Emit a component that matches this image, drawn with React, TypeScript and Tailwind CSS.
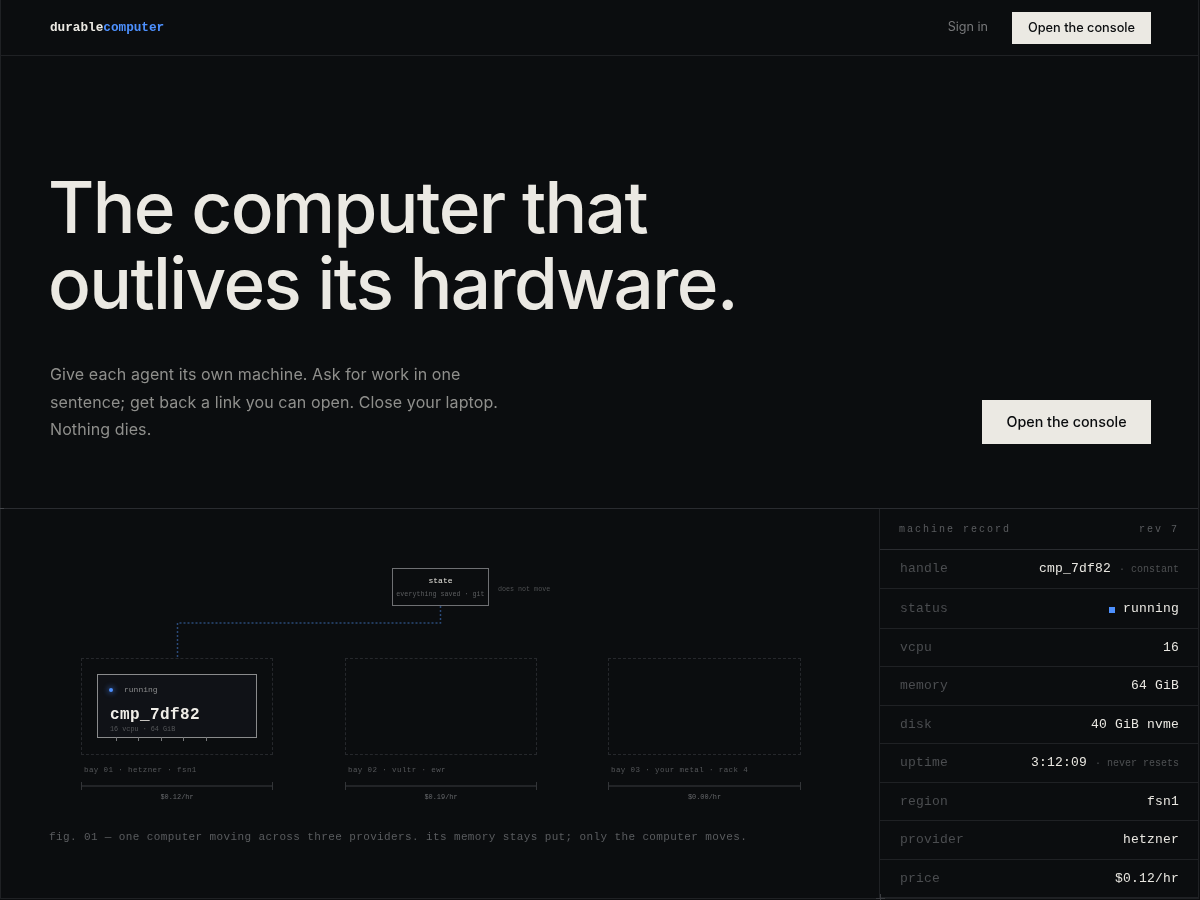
const mono = "font-['Liberation_Mono','DejaVu_Sans_Mono',monospace]";

const rows = [
  { label: "handle", value: "cmp_7df82", note: "constant", h: "h-[39px]" },
  { label: "status", value: "running", dot: true, h: "h-[40px]" },
  { label: "vcpu", value: "16", h: "h-[38px]" },
  { label: "memory", value: "64 GiB", h: "h-[39px]" },
  { label: "disk", value: "40 GiB nvme", h: "h-[38px]" },
  { label: "uptime", value: "3:12:09", note: "never resets", h: "h-[39px]" },
  { label: "region", value: "fsn1", h: "h-[38px]" },
  { label: "provider", value: "hetzner", h: "h-[39px]" },
  { label: "price", value: "$0.12/hr", h: "h-[38px]" },
];

const bays = [
  { pos: "left-[80px] w-[192px]", label: "bay 01 · hetzner · fsn1", price: "$0.12/hr" },
  { pos: "left-[344px] w-[192px]", label: "bay 02 · vultr · ewr", price: "$0.19/hr" },
  { pos: "left-[607px] w-[193px]", label: "bay 03 · your metal · rack 4", price: "$0.00/hr" },
];

function Bay({ pos, label, price }: { pos: string; label: string; price: string }) {
  return (
    <div className={`absolute top-[149px] ${pos}`}>
      <div className="h-[97px] border border-dashed border-[#26282c]" />
      <p className={`${mono} mt-[10px] pl-[3px] text-[7.5px] leading-[10px] tracking-[0.4px] whitespace-nowrap text-[#55575a]`}>
        {label}
      </p>
      <div className="relative mt-[10px] h-[2px] bg-[#222427]">
        <span className="absolute left-0 top-[-3px] h-[8px] w-[1px] bg-[#333538]" />
        <span className="absolute right-0 top-[-3px] h-[8px] w-[1px] bg-[#333538]" />
      </div>
      <p className={`${mono} mt-[5px] text-center text-[6.9px] leading-[10px] text-[#66686b]`}>{price}</p>
    </div>
  );
}

function Diagram() {
  return (
    <div className="relative h-[390px] w-full [will-change:transform]">
      {/* connector from state to the live bay */}
      <svg className="absolute left-0 top-0" width="879" height="390" fill="none">
        <path d="M439.5 97V114H176.5V149" stroke="#2b4a78" strokeWidth="1.5" strokeDasharray="2 2" />
      </svg>

      <div className="absolute left-[391px] top-[59px] flex h-[38px] w-[97px] flex-col items-center border border-[#6f7073] pt-[7px]">
        <p className={`${mono} text-[8px] leading-[10px] text-[#e4e2dc]`}>state</p>
        <p className={`${mono} mt-[3px] text-[6.7px] leading-[10px] whitespace-nowrap text-[#5c5e60]`}>
          everything saved · git
        </p>
      </div>
      <p className={`${mono} absolute left-[497px] top-[75px] text-[6.7px] leading-[10px] whitespace-nowrap text-[#4e5052]`}>
        does not move
      </p>

      {bays.map((b) => (
        <Bay key={b.label} {...b} />
      ))}

      <div className="absolute left-[96px] top-[165px] h-[64px] w-[160px] border border-[#8a8b8c] bg-[#101217] pl-[12px] pt-[9px]">
        <div className="flex items-center">
          <span className="-ml-[1px] h-[4px] w-[4px] rounded-full bg-[#4d90fe] shadow-[0_0_5px_2px_rgba(77,144,254,0.3)]" />
          <span className={`${mono} ml-[11px] text-[8px] leading-[11px] text-[#8b8c8d]`}>running</span>
        </div>
        <p className={`${mono} mt-[10px] text-[16px] leading-[20px] font-bold tracking-[0.4px] text-[#f0eee8]`}>
          cmp_7df82
        </p>
        <p className={`${mono} text-[6.8px] leading-[8px] text-[#55575a]`}>16 vcpu · 64 GiB</p>
        <div className="absolute left-[18px] top-[62px] flex gap-[21.4px]">
          {[0, 1, 2, 3, 4].map((t) => (
            <span key={t} className="h-[4px] w-[1px] bg-[#77787a]" />
          ))}
        </div>
      </div>

      <p className={`${mono} absolute left-[48px] top-[321px] text-[11px] leading-[14px] tracking-[0.38px] whitespace-nowrap text-[#5a5c5f]`}>
        fig. 01 — one computer moving across three providers. its memory stays put; only the computer moves.
      </p>
    </div>
  );
}

function Record() {
  return (
    <aside className="w-[319px] shrink-0 border-l border-[#1f2124] [will-change:transform]">
      <div className={`${mono} flex h-[41px] items-center justify-between border-b border-[#2a2c30] pl-[19px] pr-[19px] text-[10px] tracking-[2px] text-[#5a5c5f]`}>
        <span>machine record</span>
        <span>rev 7</span>
      </div>
      {rows.map((r) => (
        <div
          key={r.label}
          className={`${mono} ${r.h} flex items-center justify-between border-b border-[#1f2124] pl-[20px] pr-[19px] text-[13px] tracking-[0.2px]`}
        >
          <span className="text-[#4b4d50]">{r.label}</span>
          <span className="flex items-center text-[#e9e7e1]">
            {r.dot && <span className="mr-[8px] mt-[2px] h-[6px] w-[6px] bg-[#4d90fe]" />}
            {r.value}
            {r.note && (
              <span className="ml-[8px] text-[10px] tracking-normal text-[#4e5052]">· {r.note}</span>
            )}
          </span>
        </div>
      ))}
    </aside>
  );
}

export default function App() {
  return (
    <div className="h-[900px] overflow-hidden bg-[#0b0d0f] font-['Inter',sans-serif] text-[#ebe9e3]">
      <div className="mr-[1px] h-[899px] border-x border-b border-[#1f2124]">
        <header className="flex h-[56px] items-center justify-between border-b border-[#1f2124] pl-[49px] pr-[47px] [will-change:transform]">
          <div className={`${mono} pt-[1px] text-[12.7px] font-bold`}>
            durable<span className="text-[#4d90fe]">computer</span>
          </div>
          <div className="flex items-center gap-[24px]">
            <a className="text-[12.6px] text-[#77787a]">Sign in</a>
            <a className="flex h-[32px] w-[139px] items-center justify-center bg-[#ebe9e3] text-[12.75px] font-medium text-[#0b0d0f]">
              Open the console
            </a>
          </div>
        </header>

        <section className="flex h-[453px] items-end justify-between border-b border-[#2a2c30] pb-[64px] pl-[49px] pr-[47px] [will-change:transform]">
          <div className="mb-[0.5px]">
            <h1 className="-ml-[2px] text-[71px] leading-[76px] font-[550] tracking-[-1.6px]">
              The computer that
              <br />
              outlives its hardware.
            </h1>
            <p className="mt-[40.5px] w-[460px] text-[16px] leading-[27.5px] tracking-[0.1px] text-[#8f8f8c]">
              Give each agent its own machine. Ask for work in one sentence; get back a link you can open. Close your laptop. Nothing dies.
            </p>
          </div>
          <a className="flex h-[44px] w-[169px] items-center justify-center bg-[#ebe9e3] pb-[1px] text-[14.3px] font-medium text-[#0b0d0f]">
            Open the console
          </a>
        </section>

        <section className="relative flex">
          <div className="flex-1">
            <Diagram />
          </div>
          <Record />
          {/* registration marks on the frame */}
          <span className="absolute left-[-1px] top-[-1px] z-10 h-[1px] w-[4px] bg-[#44464a]" />
          <span className="absolute left-[875px] top-[389px] z-10 h-[1px] w-[9px] bg-[#3a3c40]" />
          <span className="absolute left-[879px] top-[385px] z-10 h-[8px] w-[1px] bg-[#3a3c40]" />
        </section>
      </div>
    </div>
  );
}
